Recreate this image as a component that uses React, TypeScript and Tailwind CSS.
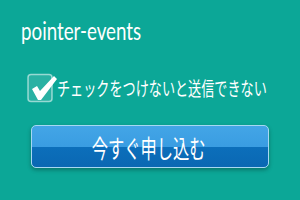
import React, { FC } from "react";

const CheckMark: FC = () => (
  <svg width="32" height="30" viewBox="0 0 32 30" className="shrink-0">
    <rect x="1" y="1.5" width="24" height="27" rx="3" fill="rgba(255,255,255,0.12)" stroke="rgba(255,255,255,0.55)" strokeWidth="1.5" />
    <path d="M5 16 L10 13 L13 18 L27 3 L30 6 L14 27 L11 27 Z" fill="#ffffff" />
  </svg>
);

const App: FC = () => {
  return (
    <div className="w-[300px] h-[200px] bg-[#0ca797] pt-[14px] pl-[21px] overflow-hidden">
      <h1 className="h-[32px] text-white text-[25px] leading-[32px] font-normal font-['Lato',sans-serif]">
        <span className="inline-block origin-left scale-x-[0.75]">pointer-events</span>
      </h1>

      <label className="mt-[27px] ml-[6px] flex items-center h-[30px] text-white">
        <CheckMark />
        <span className="inline-block whitespace-nowrap origin-left scale-x-[0.69] text-[19px] leading-[30px] font-['Noto_Sans_CJK_JP',sans-serif] -ml-[2px]">
          チェックをつけないと送信できない
        </span>
      </label>

      <button className="mt-[22px] ml-[10px] w-[238px] h-[43px] rounded-[5px] border border-[#a6d8f3] bg-[linear-gradient(to_bottom,#43a5e6_0%,#3a9de2_50%,#0c6fbb_50%,#0a68b3_100%)] shadow-[0_2px_4px_rgba(0,0,0,0.3)] flex items-center justify-center text-white">
        <span className="inline-block whitespace-nowrap scale-x-[0.65] text-[25px] leading-[30px] font-['Noto_Sans_CJK_JP',sans-serif] -translate-x-[1px]">
          今すぐ申し込む
        </span>
      </button>
    </div>
  );
};

export default App;
